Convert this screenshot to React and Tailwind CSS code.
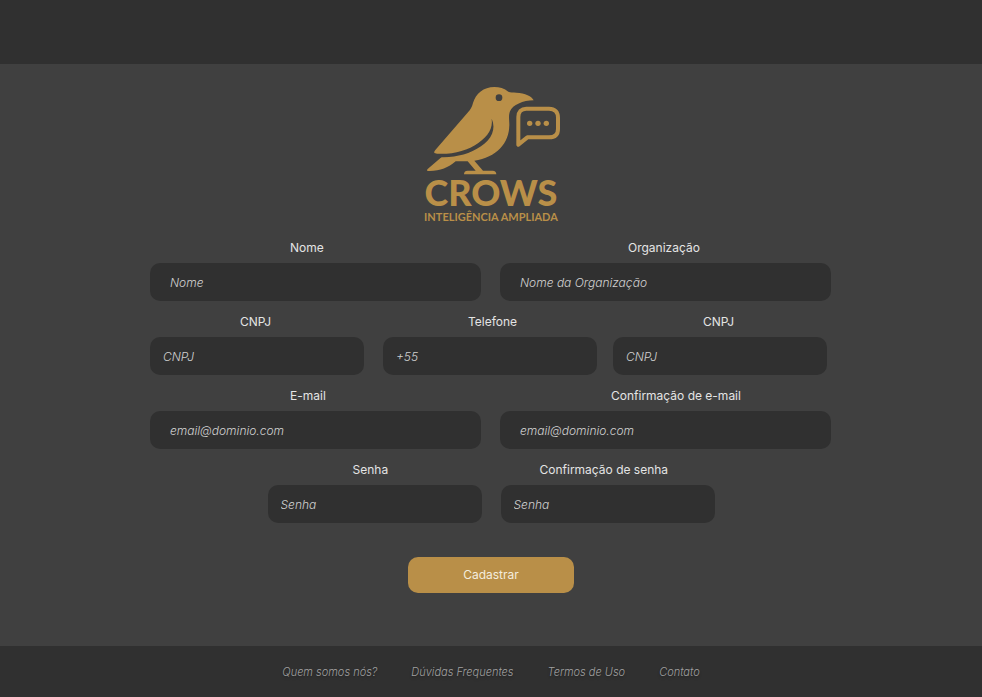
function Logo() {
  return (
    <div className="flex flex-col items-center text-[#b98f48]">
      <svg viewBox="0 0 495 270" className="h-[90px] w-[165px]" fill="none" aria-hidden="true">
        <path
          fill="currentColor"
          d="M374 46C369 34 348 24 322 23C312 22 304 22 298 20C286 10 271 6 256 6C224 6 200 26 192 54C189 66 185 73 177 82L79 195C74 201 74 205 82 206L98 216L56 252C52 257 54 259 62 258C94 258 118 248 140 229L176 229L200 257L176 257C168 257 165 262 165 268L262 268C262 261 258 257 251 257L222 257L196 227C262 218 301 174 301 120C301 103 298 93 303 79C311 60 342 46 374 46Z"
        />
        <path
          fill="#404040"
          d="M70 205C122 211 172 200 208 174C238 152 252 130 248 101C262 132 248 162 216 184C180 209 136 219 88 216L70 216Z"
        />
        <circle cx="270" cy="38" r="10" fill="#404040" />
        <path
          stroke="currentColor"
          strokeWidth="12"
          strokeLinejoin="round"
          d="M352 71H420C438 71 447 82 447 98V132C447 148 438 157 420 157H355L328 179V96C328 80 337 71 352 71Z"
        />
        <g fill="currentColor">
          <circle cx="362" cy="115" r="8" />
          <circle cx="387" cy="115" r="8" />
          <circle cx="412" cy="115" r="8" />
        </g>
      </svg>
      <p className="font-['Lato'] text-[36px] leading-[34px] font-black">CROWS</p>
      <p className="font-['Lato'] text-[11px] leading-4 font-bold">INTELIGÊNCIA AMPLIADA</p>
    </div>
  );
}

function Field({ id, label, indent, wide, type = "text", placeholder }) {
  return (
    <div className={wide ? "w-[331px]" : "w-[214px]"}>
      <label htmlFor={id} className={`block text-[12px] leading-5 text-[#e4e4e4] ${indent}`}>
        {label}
      </label>
      <input
        id={id}
        name={id}
        type={type}
        placeholder={placeholder}
        className={`mt-[5px] block h-[38px] w-full rounded-[10px] bg-[#303030] text-[12px] text-[#e4e4e4] outline-none placeholder:font-light placeholder:text-[#d0d0d0] placeholder:italic ${wide ? "px-5" : "px-[13px]"}`}
      />
    </div>
  );
}

const links = ["Quem somos nós?", "Dúvidas Frequentes", "Termos de Uso", "Contato"];

export default function App() {
  return (
    <div className="flex min-h-screen flex-col bg-[#404040] font-['Inter',sans-serif]">
      <header className="h-16 bg-[#303030]" />
      <main className="flex flex-1 flex-col items-center pt-[21px]">
        <Logo />
        <form className="mt-[13px] flex w-full max-w-[682px] flex-col gap-[11px]">
          <div className="flex gap-[19px]">
            <Field wide id="nome" label="Nome" indent="pl-[140px]" placeholder="Nome" />
            <Field wide id="organizacao" label="Organização" indent="pl-[128px]" placeholder="Nome da Organização" />
          </div>
          <div className="flex gap-4">
            <div className="flex gap-[19px]">
              <Field id="cnpj" label="CNPJ" indent="pl-[90px]" placeholder="CNPJ" />
              <Field id="telefone" type="tel" label="Telefone" indent="pl-[85px]" placeholder="+55" />
            </div>
            <Field id="cnpj2" label="CNPJ" indent="pl-[90px]" placeholder="CNPJ" />
          </div>
          <div className="flex gap-[19px]">
            <Field wide id="email" type="email" label="E-mail" indent="pl-[140px]" placeholder="email@dominio.com" />
            <Field wide id="email2" type="email" label="Confirmação de e-mail" indent="pl-[111px]" placeholder="email@dominio.com" />
          </div>
          <div className="flex justify-center gap-[19px]">
            <Field id="senha" type="password" label="Senha" indent="pl-[85px]" placeholder="Senha" />
            <Field id="senha2" type="password" label="Confirmação de senha" indent="pl-[39px]" placeholder="Senha" />
          </div>
          <button type="submit" className="mt-[23px] h-9 w-[166px] self-center rounded-[10px] bg-[#b98f48] text-[12px] text-[#f4ecdd]">
            Cadastrar
          </button>
        </form>
      </main>
      <footer className="flex h-[51px] items-center justify-center bg-[#303030]">
        <nav className="flex gap-[34px] text-[11px] leading-4 font-light text-[#a0a0a0] italic text-shadow-md">
          {links.map((text) => (
            <a key={text} href="#">
              {text}
            </a>
          ))}
        </nav>
      </footer>
    </div>
  );
}
